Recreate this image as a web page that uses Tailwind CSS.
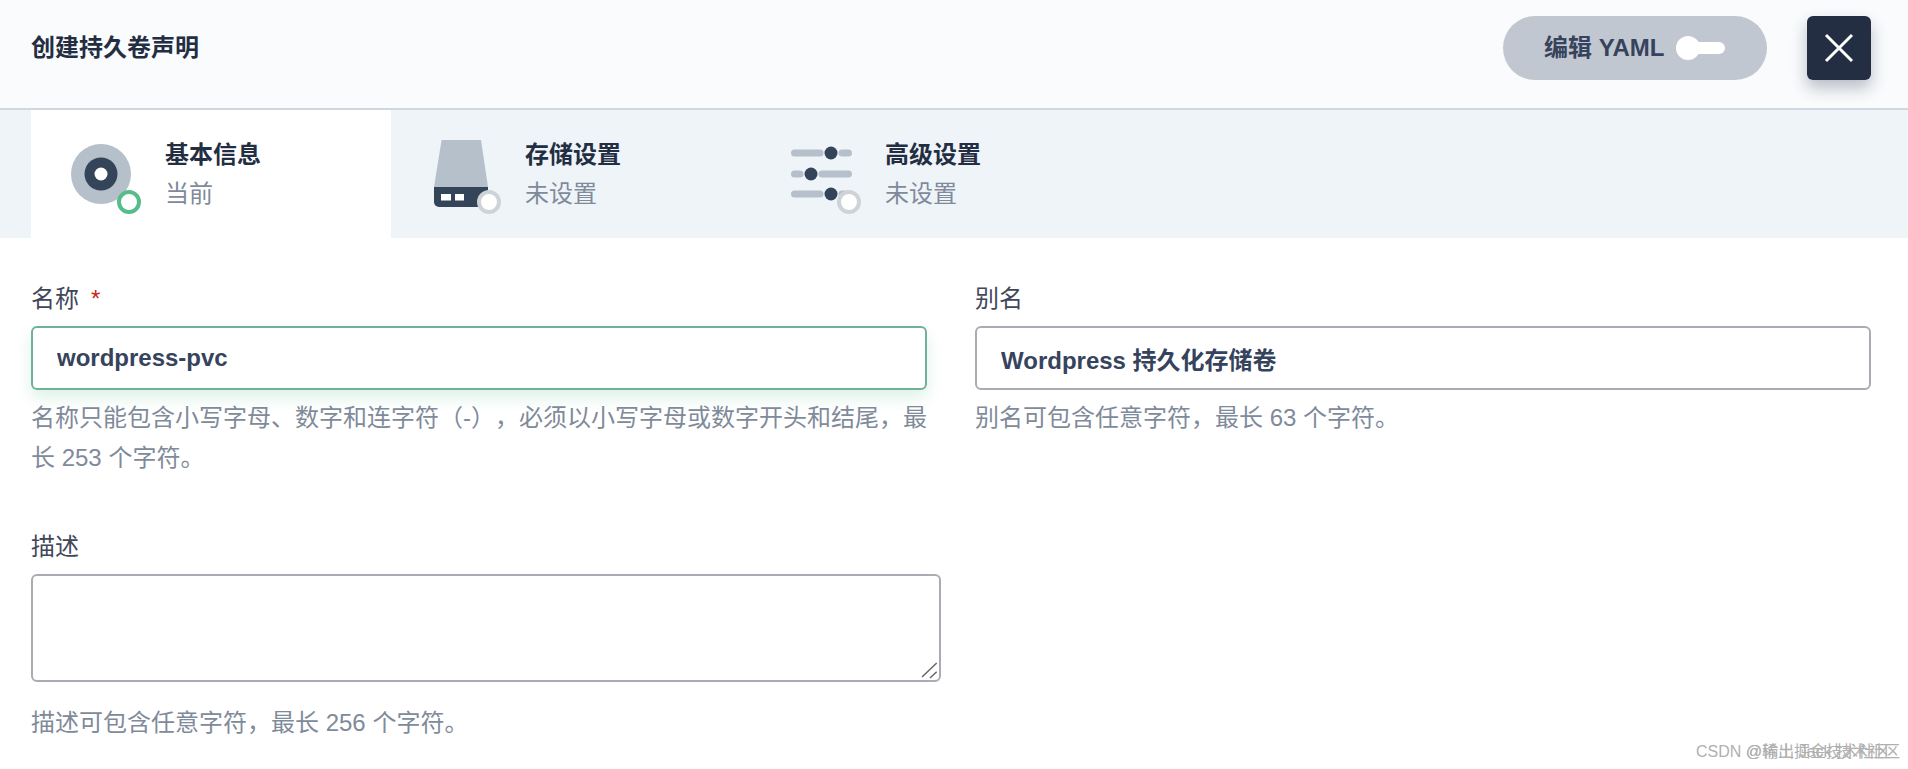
<!DOCTYPE html>
<html lang="zh-CN">
<head>
    <meta charset="UTF-8">
    <meta name="viewport" content="width=device-width, initial-scale=1.0">
    <script src="https://cdn.jsdelivr.net/npm/@tailwindcss/browser@4"></script>
    <title>创建持久卷声明</title>
</head>
<body class="relative h-[769px] w-[1908px] overflow-hidden bg-white font-['Liberation_Sans','Noto_Sans_CJK_SC',sans-serif] text-[24px] leading-[40px] text-[#3f4759] [text-spacing-trim:space-all]">
    <!-- header -->
    <div class="flex h-[110px] items-start border-b-2 border-[#d1d7de] bg-[#f9fbfd] pl-[31px] pr-[37px] pt-[16px]">
        <h1 class="flex-1 font-bold leading-[64px] text-[#242e42]">创建持久卷声明</h1>
        <button class="flex h-[64px] w-[264px] items-center rounded-[32px] bg-[#c1c7d0] pl-[41px] font-bold text-[#36435c]">
            <span>编辑 YAML</span>
            <svg class="ml-[12px]" width="50" height="24" viewBox="0 0 50 24">
                <rect x="8" y="6" width="41" height="12" rx="6" fill="#fff"/>
                <circle cx="12" cy="12" r="12" fill="#fff"/>
            </svg>
        </button>
        <button class="ml-[40px] flex size-[64px] items-center justify-center rounded-[6px] bg-[#242e42] shadow-[0_8px_16px_rgba(36,46,66,0.3)]">
            <svg width="32" height="32" viewBox="0 0 32 32" fill="none" stroke="#fff" stroke-width="3">
                <path d="M3 3 L29 29 M29 3 L3 29"/>
            </svg>
        </button>
    </div>

    <!-- steps -->
    <div class="flex h-[128px] bg-[#eff4f9] pl-[31px]">
        <div class="flex w-[360px] items-center gap-[19px] bg-white pl-[35px]">
            <svg width="80" height="80" viewBox="0 0 80 80">
                <circle cx="35" cy="40" r="30" fill="#b6c0ca"/>
                <circle cx="35" cy="40" r="16.5" fill="#34455a"/>
                <circle cx="35" cy="40" r="6.5" fill="#fff"/>
                <circle cx="63" cy="68" r="10" fill="#fff" stroke="#55bc8a" stroke-width="4"/>
            </svg>
            <div>
                <div class="pt-px font-bold text-[#242e42]">基本信息</div>
                <div class="-mt-px text-[#7f8a9a]">当前</div>
            </div>
        </div>
        <div class="flex w-[360px] items-center gap-[19px] pl-[35px]">
            <svg width="80" height="80" viewBox="0 0 80 80">
                <path d="M15.6 6 H55 L62 53 H8 Z" fill="#b6c0ca"/>
                <path d="M8 53 H62 V68 a5 5 0 0 1 -5 5 H13 a5 5 0 0 1 -5 -5 Z" fill="#34455a"/>
                <rect x="15" y="60" width="10" height="6.5" fill="#fff"/>
                <rect x="29" y="60" width="9" height="6.5" fill="#fff"/>
                <circle cx="63" cy="68" r="10" fill="#fff" stroke="#ced3d8" stroke-width="4"/>
            </svg>
            <div>
                <div class="pt-px font-bold text-[#242e42]">存储设置</div>
                <div class="-mt-px text-[#7f8a9a]">未设置</div>
            </div>
        </div>
        <div class="flex w-[360px] items-center gap-[19px] pl-[35px]">
            <svg width="80" height="80" viewBox="0 0 80 80" fill="none">
                <g stroke="#b6c0ca" stroke-width="7" stroke-linecap="round">
                    <path d="M8.500 19 H34 M56 19 H62.500"/>
                    <path d="M8.500 40 H14 M36 40 H62.500"/>
                    <path d="M8.500 60 H34 M56 60 H60"/>
                </g>
                <circle cx="45" cy="19" r="6.500" fill="#34455a"/>
                <circle cx="25" cy="40" r="6.500" fill="#34455a"/>
                <circle cx="45" cy="60" r="6.500" fill="#34455a"/>
                <circle cx="63" cy="68" r="10" fill="#fff" stroke="#ced3d8" stroke-width="4"/>
            </svg>
            <div>
                <div class="pt-px font-bold text-[#242e42]">高级设置</div>
                <div class="-mt-px text-[#7f8a9a]">未设置</div>
            </div>
        </div>
    </div>

    <!-- form -->
    <div class="pl-[31px] pr-[37px] pt-[41px]">
        <div class="grid grid-cols-2 gap-x-[48px]">
            <div>
                <label class="mb-[7px] block">名称<span class="ml-[12px] text-[#ca2621]">*</span></label>
                <input type="text" value="wordpress-pvc" class="block h-[64px] w-full rounded-[6px] border-2 border-[#6fb297] bg-white px-[24px] font-bold text-[#36435c] shadow-[0_8px_16px_rgba(85,188,138,0.2)] outline-none">
                <p class="mt-[8px] text-[#7f8a9a]">名称只能包含小写字母、数字和连字符（-），必须以小写字母或数字开头和结尾，最长 253 个字符。</p>
            </div>
            <div>
                <label class="mb-[7px] block">别名</label>
                <input type="text" value="Wordpress 持久化存储卷" class="block h-[64px] w-full rounded-[6px] border-2 border-[#a9adb3] bg-white px-[24px] font-bold text-[#36435c] outline-none">
                <p class="mt-[8px] text-[#7f8a9a]">别名可包含任意字符，最长 63 个字符。</p>
            </div>
        </div>
        <div class="mt-[49px]">
            <label class="mb-[7px] block">描述</label>
            <div class="relative w-[910px]">
                <textarea class="block h-[108px] w-full resize-none rounded-[6px] border-2 border-[#a9adb3] bg-white outline-none"></textarea>
                <!-- resize handle -->
                <svg class="absolute bottom-[2px] right-[2px]" width="20" height="20" viewBox="0 0 20 20" fill="none" stroke="#666" stroke-width="1.500">
                    <path d="M3 17 L17.700 3 M11 18 L17.700 11.700"/>
                </svg>
            </div>
            <p class="mt-[21px] text-[#7f8a9a]">描述可包含任意字符，最长 256 个字符。</p>
        </div>
    </div>

    <!-- watermark, two copies stamped over each other -->
    <div class="absolute left-[1696px] top-[740px] whitespace-nowrap text-[16px] leading-[24px] text-[#b0b0b0]">CSDN @稀土掘金技术社区</div>
    <div class="absolute right-[8px] top-[740px] whitespace-nowrap text-[16px] leading-[24px] text-[#b0b0b0]">@输出 Jack 技术社区</div>
</body>
</html>
